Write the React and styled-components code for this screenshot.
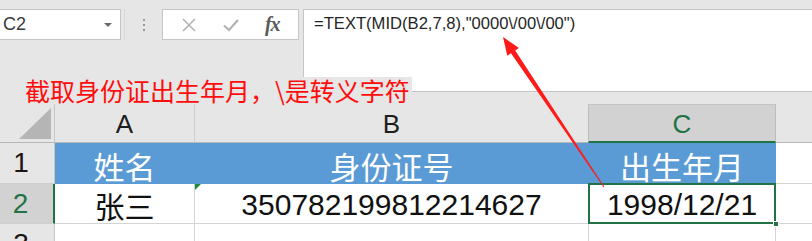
import React from "react";
import styled, { createGlobalStyle, css } from "styled-components";

const CJK = `"Noto Sans CJK SC", sans-serif`;
const SANS = `"Liberation Sans", "Noto Sans CJK SC", sans-serif`;
const GREEN = "#217346";
const GRID = "#d4d4d4";
const CHROME = "#e6e6e6";

const Global = createGlobalStyle`
  html, body { margin: 0; padding: 0; background: ${CHROME}; }
  * { box-sizing: border-box; }
`;

const Screen = styled.div`
  position: relative;
  width: 812px;
  height: 241px;
  overflow: hidden;
  background: ${CHROME};
  font-family: ${SANS};
`;

const FormulaBar = styled.div`
  display: flex;
  align-items: flex-start;
  height: 92px;
  padding-top: 9px;
`;

const NameBox = styled.div`
  width: 121px;
  height: 31px;
  background: #fff;
  border: 1px solid #c6c6c6;
  border-left: none;
  display: flex;
  align-items: center;
  justify-content: space-between;
  padding: 0 8px 0 3px;
  font-size: 18px;
  color: #3a3a3a;
`;

const Caret = styled.span`
  width: 0;
  height: 0;
  border-left: 4px solid transparent;
  border-right: 4px solid transparent;
  border-top: 4px solid #6a6a6a;
`;

const Grip = styled.div`
  width: 38px;
  height: 31px;
  display: flex;
  flex-direction: column;
  align-items: center;
  justify-content: center;
  gap: 3px;
  border-left: 1px solid #d9d9d9;
  margin-left: 3px;
  span {
    width: 2px;
    height: 2px;
    background: #9a9a9a;
  }
`;

const Buttons = styled.div`
  width: 137px;
  height: 31px;
  background: #fff;
  border: 1px solid #c6c6c6;
  display: flex;
  align-items: center;
  justify-content: space-around;
  padding: 0 6px;
`;

const Fx = styled.span`
  font-family: "Liberation Serif", serif;
  font-style: italic;
  font-weight: bold;
  font-size: 20px;
  color: #5a5a5a;
  letter-spacing: -1px;
`;

const FormulaInput = styled.div`
  flex: 1;
  margin-left: 4px;
  height: 83px;
  background: #fff;
  border-top: 1px solid #c6c6c6;
  border-left: 1px solid #c6c6c6;
  border-bottom: 1px solid #c6c6c6;
  padding: 4px 0 0 10px;
  font-size: 16.6px;
  line-height: 20px;
  color: #262626;
  white-space: pre;
`;

const Sheet = styled.div`
  margin-top: 12px;
  display: grid;
  grid-template-columns: 55px 140px 394px 187px 100px;
  grid-template-rows: 39px 41px 40px 40px;
  width: 876px;
`;

const Corner = styled.div`
  position: relative;
  border-right: 1px solid #c6c6c6;
  border-bottom: 1px solid #b8b8b8;
  &::after {
    content: "";
    position: absolute;
    right: 3px;
    bottom: 3px;
    width: 0;
    height: 0;
    border-left: 32px solid transparent;
    border-bottom: 31px solid #b5b5b5;
  }
`;

const ColHead = styled.div`
  display: flex;
  align-items: center;
  justify-content: center;
  padding-top: 2px;
  font-size: 26px;
  color: #1e1e1e;
  border-right: 1px solid #cfcfcf;
  border-bottom: 1px solid #b8b8b8;
  ${(p) =>
    p.$active &&
    css`
      background: #d2d2d2;
      color: ${GREEN};
      border-top: 1px solid #c4c4c4;
      border-bottom: 2px solid ${GREEN};
      border-right: 1px solid #bdbdbd;
      border-left: 1px solid #bdbdbd;
      margin-left: -1px;
    `}
`;

const RowHead = styled.div`
  display: flex;
  align-items: center;
  justify-content: center;
  padding-right: 12px;
  font-size: 28px;
  line-height: 30px;
  color: #1e1414;
  border-right: 1px solid #c6c6c6;
  border-bottom: 1px solid #cfcfcf;
  ${(p) =>
    p.$active &&
    css`
      background: #d2d2d2;
      color: ${GREEN};
      border-right: 2px solid ${GREEN};
    `}
`;

const Cell = styled.div`
  position: relative;
  display: flex;
  align-items: center;
  justify-content: center;
  background: #fff;
  border-right: 1px solid ${GRID};
  border-bottom: 1px solid ${GRID};
  font-size: 30px;
  line-height: 32px;
  color: #111;
  padding-top: 2px;
  ${(p) =>
    p.$head &&
    css`
      background: #5b9bd5;
      color: #fff;
      font-family: ${CJK};
      font-size: 31px;
      line-height: 31px;
      border-color: #5b9bd5;
      padding-top: 4px;
    `}
  ${(p) =>
    p.$cjk &&
    css`
      font-family: ${CJK};
    `}
  ${(p) =>
    p.$selected &&
    css`
      &::after {
        content: "";
        position: absolute;
        left: -1px;
        top: -1px;
        right: -1px;
        bottom: -1px;
        border: 2px solid ${GREEN};
      }
    `}
`;

const TextFlag = styled.span`
  position: absolute;
  left: 0;
  top: 0;
  width: 0;
  height: 0;
  border-top: 6px solid #1f8a3c;
  border-right: 6px solid transparent;
`;

const FillHandle = styled.span`
  position: absolute;
  right: -4px;
  bottom: -4px;
  width: 6px;
  height: 6px;
  background: ${GREEN};
  border: 1px solid #fff;
  z-index: 2;
`;

const Note = styled.div`
  position: absolute;
  left: 20px;
  top: 77px;
  width: 392px;
  height: 27px;
  background: ${CHROME};
  padding-left: 5px;
  font-family: ${CJK};
  font-size: 25px;
  line-height: 27px;
  color: #ff0d0d;
  white-space: nowrap;
`;

const Overlay = styled.svg`
  position: absolute;
  left: 0;
  top: 0;
  pointer-events: none;
`;

export default function App() {
  return (
    <>
      <Global />
      <Screen>
        <FormulaBar>
          <NameBox>
            C2
            <Caret />
          </NameBox>
          <Grip>
            <span />
            <span />
            <span />
          </Grip>
          <Buttons>
            <svg width="16" height="16" viewBox="0 0 16 16">
              <path d="M2 2 L14 14 M14 2 L2 14" stroke="#b3b3b3" strokeWidth="1.6" fill="none" />
            </svg>
            <svg width="18" height="16" viewBox="0 0 18 16">
              <path d="M2 8.5 L7 13 L16 3" stroke="#b3b3b3" strokeWidth="2.2" fill="none" />
            </svg>
            <Fx>fx</Fx>
          </Buttons>
          <FormulaInput>{'=TEXT(MID(B2,7,8),"0000\\/00\\/00")'}</FormulaInput>
        </FormulaBar>

        <Sheet>
          <Corner />
          <ColHead>A</ColHead>
          <ColHead>B</ColHead>
          <ColHead $active>C</ColHead>
          <ColHead />

          <RowHead>1</RowHead>
          <Cell $head>姓名</Cell>
          <Cell $head>身份证号</Cell>
          <Cell $head>出生年月</Cell>
          <Cell />

          <RowHead $active>2</RowHead>
          <Cell $cjk>张三</Cell>
          <Cell>
            <TextFlag />
            350782199812214627
          </Cell>
          <Cell $selected>
            1998/12/21
            <FillHandle />
          </Cell>
          <Cell />

          <RowHead>3</RowHead>
          <Cell />
          <Cell />
          <Cell />
          <Cell />
        </Sheet>

        <Note>截取身份证出生年月，\是转义字符</Note>

        <Overlay width="812" height="241" viewBox="0 0 812 241">
          <polygon
            points="503,37 518.9,48 515.2,50.5 604.4,186.7 603.6,187.3 511,53.3 507.3,55.8"
            fill="#ff1a1a"
          />
        </Overlay>
      </Screen>
    </>
  );
}
